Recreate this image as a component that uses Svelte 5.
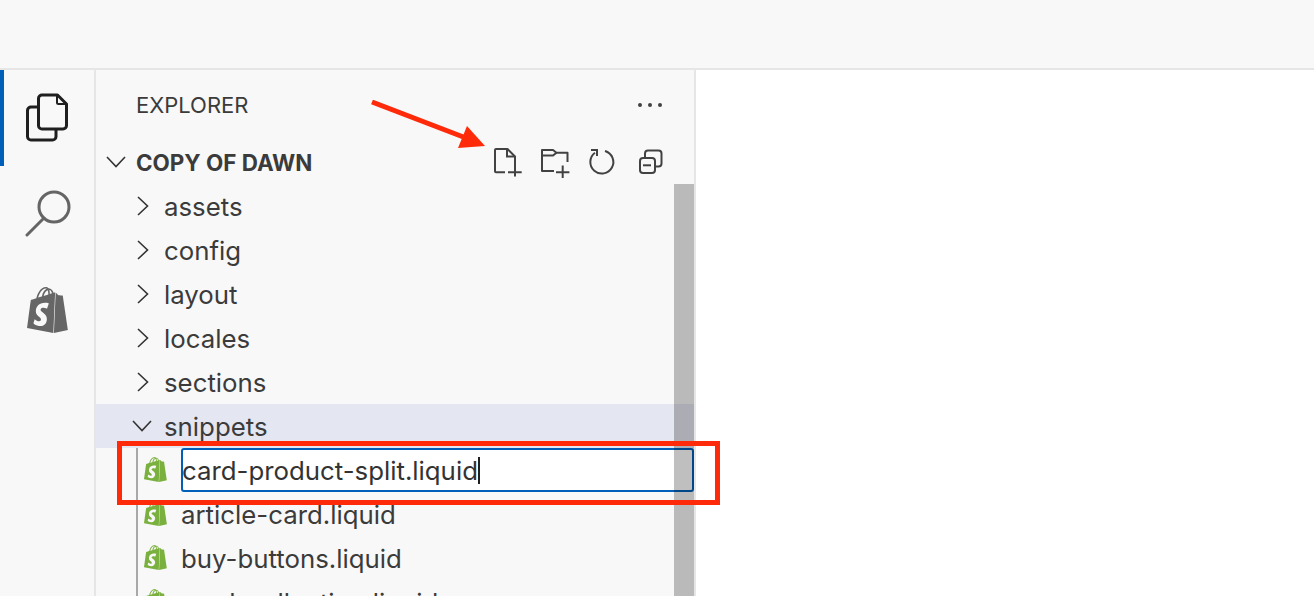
<script>
  const folders = ['assets', 'config', 'layout', 'locales', 'sections'];
  const files = ['article-card.liquid', 'buy-buttons.liquid', 'card-collection.liquid'];
  const shopifyA = 'M15.337 23.979l7.216-1.561s-2.604-17.613-2.625-17.73c-.018-.116-.114-.192-.211-.192s-1.929-.136-1.929-.136-1.275-1.274-1.439-1.411c-.045-.037-.075-.057-.121-.074l-.914 21.104h.023z';
  const shopifyB = 'M11.71 11.305s-.81-.424-1.774-.424c-1.447 0-1.504.906-1.504 1.141 0 1.232 3.24 1.715 3.24 4.629 0 2.295-1.44 3.76-3.406 3.76-2.354 0-3.54-1.465-3.54-1.465l.646-2.086s1.245 1.066 2.28 1.066c.675 0 .975-.545.975-.932 0-1.619-2.654-1.694-2.654-4.359-.034-2.237 1.571-4.416 4.827-4.416 1.257 0 1.875.361 1.875.361l-.945 2.715-.02.01zM11.17.83c.136 0 .271.038.405.135-.984.465-2.064 1.639-2.508 3.992-.656.213-1.293.405-1.889.578C7.697 3.75 8.951.84 11.17.84V.83zm1.235 2.949v.135c-.754.232-1.583.484-2.394.736.466-1.777 1.333-2.645 2.085-2.971.193.501.309 1.176.309 2.1zm.539-2.234c.694.074 1.141.867 1.429 1.755-.349.114-.735.231-1.158.366v-.252c0-.752-.096-1.371-.271-1.871v.002zm2.992 1.289c-.02 0-.06.021-.078.021s-.289.075-.714.21c-.423-1.233-1.176-2.37-2.508-2.37h-.115C12.135.209 11.669 0 11.265 0 8.159 0 6.675 3.877 6.21 5.846c-1.194.365-2.063.636-2.16.674-.675.213-.694.232-.772.87-.075.462-1.83 14.063-1.83 14.063L15.009 24l.927-21.166z';
</script>

{#snippet shopify(cls)}
  <svg class={cls} viewBox="1.4 0 21.2 24" preserveAspectRatio="none" aria-hidden="true">
    <path d={shopifyA} /><path d={shopifyB} fill-rule="evenodd" />
  </svg>
{/snippet}

<div class="page">
  <header class="titlebar"></header>
  <div class="workbench">
    <nav class="activity">
      <div class="act active">
        <svg width="44" height="52" viewBox="0 0 44 52" fill="none" stroke="#1f1f1f" stroke-width="3" stroke-linejoin="round">
          <path d="M13 15H6a3.500 3.500 0 0 0-3.500 3.500v26A3.500 3.500 0 0 0 6 48h21.500a3.500 3.500 0 0 0 3.500-3.500V37" />
          <path d="M17 3h15.500L41.500 12v21.500a3.500 3.500 0 0 1-3.500 3.500H17a3.500 3.500 0 0 1-3.500-3.500v-27A3.500 3.500 0 0 1 17 3z" />
          <path d="M32 3v7.500a1.500 1.500 0 0 0 1.500 1.500H41.500" stroke-width="2" />
        </svg>
      </div>
      <div class="act">
        <svg width="48" height="48" viewBox="0 0 48 48" fill="none" stroke="#656565" stroke-width="3">
          <circle cx="30" cy="18" r="15" />
          <path d="M20 29 3 46" stroke-linecap="round" />
        </svg>
      </div>
      <div class="act">{@render shopify('bag')}</div>
    </nav>

    <aside class="sidebar">
      <div class="sidebar-title">
        <span>EXPLORER</span>
        <svg class="more" width="26" height="6" viewBox="0 0 26 6" fill="#424242">
          <circle cx="3" cy="3" r="2" /><circle cx="13" cy="3" r="2" /><circle cx="23" cy="3" r="2" />
        </svg>
      </div>

      <div class="section-head">
        <svg class="chev-down" width="20" height="12" viewBox="0 0 20 12" fill="none" stroke="#333" stroke-width="1.6"><path d="M1 1l9 9.500L19 1" /></svg>
        <strong>COPY OF DAWN</strong>
        <div class="toolbar">
          <svg width="32" height="32" viewBox="0 0 32 32" fill="none" stroke="#424242" stroke-width="2">
            <path d="M13 26.300H4a1 1 0 0 1-1-1V4a1 1 0 0 1 1-1h11.500L23 10.500v6" stroke-linejoin="round" />
            <path d="M15 3v7.500h8" />
            <path d="M23 16v14.500M16 26.300h13.700" />
          </svg>
          <svg width="32" height="32" viewBox="0 0 32 32" fill="none" stroke="#424242" stroke-width="2">
            <path d="M14 25H2V4h11l3.500 2.700H27.500V16" stroke-linejoin="round" />
            <path d="M2 9.500h11l3.500-2.800" />
            <path d="M22.700 19.500v13.500M16 26.300h13.400" />
          </svg>
          <svg width="32" height="32" viewBox="0 0 32 32" fill="none" stroke="#424242" stroke-width="2">
            <path d="M7 6.800A11.500 11.500 0 1 0 17 5" />
            <path d="M3 4h6v6" />
          </svg>
          <svg width="32" height="32" viewBox="0 0 32 32" fill="none" stroke="#424242" stroke-width="2">
            <rect x="4" y="12" width="15" height="15" rx="3" />
            <path d="M9 12V7.500a3 3 0 0 1 3-3h10.500a3 3 0 0 1 3 3V17.500a3 3 0 0 1-3 3H19" />
            <path d="M7 19.300h8" />
          </svg>
        </div>
      </div>

      <ul class="tree">
        {#each folders as name}
          <li class="row folder">
            <svg class="chev-right" width="12" height="20" viewBox="0 0 12 20" fill="none" stroke="#333" stroke-width="1.6"><path d="M1 1l9.500 9L1 19" /></svg>
            {name}
          </li>
        {/each}
        <li class="row folder selected">
          <svg class="chev-open" width="20" height="12" viewBox="0 0 20 12" fill="none" stroke="#333" stroke-width="1.6"><path d="M1 1l9 9.500L19 1" /></svg>
          snippets
        </li>
        <li class="children">
          <div class="row file">
            {@render shopify('file-icon')}
            <div class="rename">card-product-split.liquid<i class="caret"></i></div>
          </div>
          {#each files as name}
            <div class="row file">
              {@render shopify('file-icon')}
              {name}
            </div>
          {/each}
        </li>
      </ul>

      <div class="scrollbar"></div>
    </aside>

    <main class="editor"></main>
  </div>

  <div class="callout"></div>
  <svg class="arrow" width="130" height="60" viewBox="0 0 130 60" fill="#ff2a0a" aria-hidden="true">
    <path d="M2 2 L96 38" stroke="#ff2a0a" stroke-width="5" />
    <path d="M115 46 L97 26 L88 48z" />
  </svg>
</div>

<style>
  :global(body) {
    margin: 0;
    background: #fff;
  }
  .page {
    position: relative;
    height: 596px;
    overflow: hidden;
    display: flex;
    flex-direction: column;
    font-family: Inter, "Open Sans", sans-serif;
    color: #3b3b3b;
    background: #f8f8f8;
  }
  .titlebar {
    height: 68px;
    flex: none;
    border-bottom: 2px solid #e6e6e6;
  }
  .workbench {
    flex: 1;
    display: flex;
    min-height: 0;
  }
  .activity {
    width: 94px;
    flex: none;
    border-right: 2px solid #e6e6e6;
    display: flex;
    flex-direction: column;
  }
  .act {
    height: 96px;
    display: flex;
    justify-content: center;
    align-items: center;
  }
  .act.active {
    box-shadow: inset 4px 0 0 #005fb8;
  }
  .act:nth-child(2) {
    height: 94px;
    padding-left: 1px;
  }
  .act:nth-child(3) {
    height: 100px;
  }
  .bag {
    width: 41px;
    height: 46px;
    fill: #666;
  }
  .sidebar {
    position: relative;
    width: 598px;
    flex: none;
    border-right: 2px solid #e6e6e6;
  }
  .sidebar-title {
    height: 70px;
    padding: 0 31px 0 40px;
    display: flex;
    align-items: center;
    justify-content: space-between;
    font-size: 22px;
    box-sizing: border-box;
  }
  .section-head {
    height: 44px;
    padding-left: 10px;
    display: flex;
    align-items: center;
    font-size: 22.400px;
  }
  .section-head strong {
    margin-left: 10px;
    font-weight: 700;
  }
  .toolbar {
    margin-left: auto;
    margin-right: 26px;
    display: flex;
    gap: 16px;
  }
  .tree {
    list-style: none;
    margin: 0;
    padding: 0;
  }
  .row {
    height: 44px;
    box-sizing: border-box;
    display: flex;
    align-items: center;
    font-size: 25.800px;
    white-space: nowrap;
  }
  .folder {
    padding-left: 41px;
  }
  .chev-right {
    margin-right: 15px;
  }
  .chev-open {
    margin-left: -5px;
    margin-right: 12px;
  }
  .selected {
    background: #e4e6f1;
  }
  .children {
    margin-left: 40px;
    border-left: 2px solid #a8a8a8;
  }
  .file {
    padding-left: 6px;
    gap: 14px;
  }
  .file-icon {
    width: 23px;
    height: 25px;
    flex: none;
    fill: #7ab03d;
    margin-top: -2px;
  }
  .rename {
    flex: 1;
    height: 44px;
    box-sizing: border-box;
    display: flex;
    align-items: center;
    text-indent: -1px;
    background: #fff;
    color: #333;
    border: 2px solid #005fb8;
    border-radius: 3px;
  }
  .caret {
    width: 2px;
    height: 27px;
    background: #1f1f1f;
  }
  .scrollbar {
    position: absolute;
    right: 0;
    top: 114px;
    bottom: 0;
    width: 20px;
    background: rgba(0, 0, 0, 0.25);
  }
  .editor {
    flex: 1;
    background: #fff;
  }
  .callout {
    position: absolute;
    left: 117px;
    top: 441px;
    width: 593px;
    height: 54px;
    border: 5px solid #ff2a0a;
  }
  .arrow {
    position: absolute;
    left: 370px;
    top: 100px;
  }
</style>
